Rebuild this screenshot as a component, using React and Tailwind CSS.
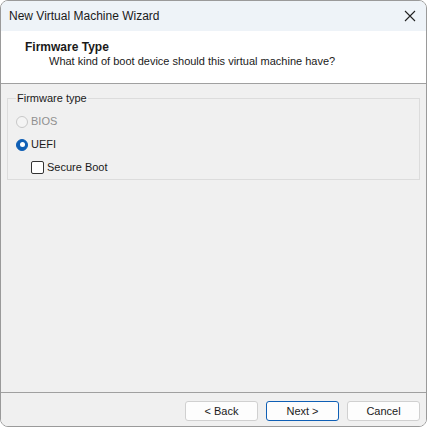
import React from "react";

const font = { fontFamily: '"Liberation Sans", Arial, sans-serif' };

const Radio = ({ checked, disabled, label }) => (
  <div className="flex items-center h-[23px]">
    <span
      className={`w-[12px] h-[12px] rounded-full border flex items-center justify-center ${
        checked
          ? "border-[#0f5fb5] bg-[#0f5fb5]"
          : disabled
          ? "border-[#c8c8c8] bg-[#f4f4f4]"
          : "border-[#333] bg-white"
      }`}
    >
      {checked && <span className="w-[5px] h-[5px] rounded-full bg-white" />}
    </span>
    <span
      className={`ml-[3px] ${disabled ? "text-[#8f8f8f]" : "text-[#1a1a1a]"}`}
    >
      {label}
    </span>
  </div>
);

const Button = ({ children, primary }) => (
  <button
    className={`w-[73px] h-[20px] rounded-[3px] bg-[#fdfdfd] text-[11px] leading-none text-[#1a1a1a] border ${
      primary ? "border-[#0f5fb5]" : "border-[#d0d0d0]"
    }`}
  >
    {children}
  </button>
);

export default function App() {
  return (
    <div className="w-[428px] h-[430px] bg-white" style={font}>
      <div className="w-[427px] h-[427px] rounded-[8px] border border-[#9a9a9a] overflow-hidden flex flex-col text-[11px] text-[#1a1a1a]">
        {/* Title bar */}
        <div className="h-[30px] shrink-0 bg-[#eef3f8] flex items-center justify-between pl-[8px] pr-[9px]">
          <span className="text-[12px]">New Virtual Machine Wizard</span>
          <svg width="12" height="12" viewBox="0 0 12 12" className="mr-[1px]">
            <path d="M1 1 L11 11 M11 1 L1 11" stroke="#222" strokeWidth="1.1" />
          </svg>
        </div>

        {/* Header */}
        <div className="h-[53px] shrink-0 bg-white border-b border-[#a0a0a0] pt-[9px] pl-[24px]">
          <div className="font-bold text-[12px] leading-[14px]">Firmware Type</div>
          <div className="pl-[24px] leading-[15px]">
            What kind of boot device should this virtual machine have?
          </div>
        </div>

        {/* Body */}
        <div className="flex-1 bg-[#f0f0f0] px-[6px] pt-[8px]">
          <fieldset className="border border-[#dcdcdc] pl-[8px] pt-[5px] pb-[1px]">
            <legend className="px-[1px] leading-[13px]">Firmware type</legend>
            <Radio disabled label="BIOS" />
            <Radio checked label="UEFI" />
            <div className="flex items-center h-[22px] pl-[15px]">
              <span className="w-[13px] h-[13px] border border-[#333] rounded-[2px] bg-white" />
              <span className="ml-[3px]">Secure Boot</span>
            </div>
          </fieldset>
        </div>

        {/* Footer */}
        <div className="h-[34px] shrink-0 bg-[#f0f0f0] border-t border-[#a0a0a0] flex items-start justify-end gap-[8px] pt-[8px] pr-[6px]">
          <Button>&lt; Back</Button>
          <Button primary>Next &gt;</Button>
          <Button>Cancel</Button>
        </div>
      </div>
    </div>
  );
}
